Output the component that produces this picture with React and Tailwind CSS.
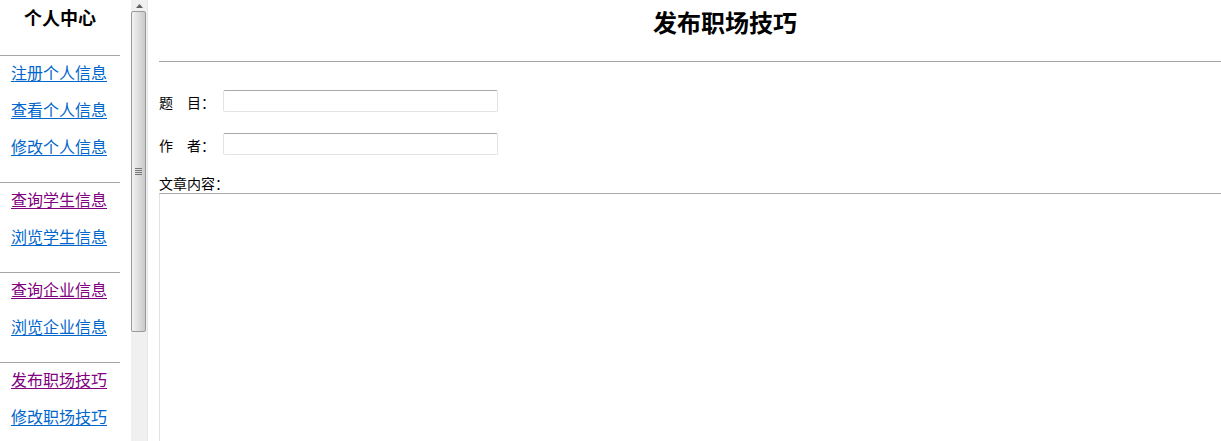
export default function App() {
  const linkBlue = "text-[#0066cc] underline underline-offset-[2px]";
  const linkPurple = "text-[#800080] underline underline-offset-[2px]";
  const Group = ({ items }) => (
    <div className="pt-[6px] pb-[26px] pl-[11px] flex flex-col gap-[17px]">
      {items.map(([t, v]) => (
        <a key={t} href="#" className={`block h-[20px] leading-[20px] text-[16px] ${v ? linkPurple : linkBlue}`}>
          {t}
        </a>
      ))}
    </div>
  );
  const Hr = ({ w }) => <div className={`h-px bg-[#a6a6a6] ${w}`} />;
  return (
    <div className="w-[1221px] h-[441px] overflow-hidden flex bg-white text-black font-['Noto_Sans_CJK_SC','Noto_Sans',sans-serif]">
      {/* left frame */}
      <div className="w-[131px] shrink-0">
        <div className="w-[120px] h-[55px] pt-[7px] text-center">
          <div className="text-[18px] leading-[20px] font-bold">个人中心</div>
        </div>
        <Hr w="w-[120px]" />
        <Group items={[["注册个人信息", false], ["查看个人信息", false], ["修改个人信息", false]]} />
        <Hr w="w-[120px]" />
        <Group items={[["查询学生信息", true], ["浏览学生信息", false]]} />
        <Hr w="w-[120px]" />
        <Group items={[["查询企业信息", true], ["浏览企业信息", false]]} />
        <Hr w="w-[120px]" />
        <Group items={[["发布职场技巧", true], ["修改职场技巧", false]]} />
      </div>
      {/* scrollbar */}
      <div className="w-[17px] shrink-0 h-full bg-[#f0f0f0] flex flex-col border-r border-[#e6e6e6]">
        <div className="h-[11px] flex items-center justify-center">
          <svg width="7" height="4" viewBox="0 0 7 4">
            <path d="M0 4 L3.5 0 L7 4 Z" fill="#606060" />
          </svg>
        </div>
        <div className="w-[15px] h-[321px] border border-[#9a9a9a] rounded-[2px] bg-[linear-gradient(to_right,#f4f4f4,#e2e2e2_40%,#c9c9c9)] flex items-center justify-center">
          <div className="flex flex-col gap-[1px]">
            <div className="w-[7px] h-px bg-[#777]" />
            <div className="w-[7px] h-px bg-[#777]" />
            <div className="w-[7px] h-px bg-[#777]" />
            <div className="w-[7px] h-px bg-[#777]" />
          </div>
        </div>
      </div>
      {/* main frame */}
      <div className="pl-[11px] shrink-0">
        <div className="w-[1132px] h-[61px] pt-[10px] text-center">
          <div className="text-[24px] leading-[24px] font-bold">发布职场技巧</div>
        </div>
        <Hr w="w-[1132px]" />
        <div className="mt-[28px] h-[22px] flex items-center text-[14px]">
          <span className="w-[56px] leading-[16px] mt-[2px]">题　目：</span>
          <input className="ml-[8px] w-[275px] h-[22px] border border-[#e3e3e3] border-t-[#a8a8a8] rounded-[2px] outline-none" />
        </div>
        <div className="mt-[21px] h-[22px] flex items-center text-[14px]">
          <span className="w-[56px] leading-[16px] mt-[2px]">作　者：</span>
          <input className="ml-[8px] w-[275px] h-[22px] border border-[#e3e3e3] border-t-[#a8a8a8] rounded-[2px] outline-none" />
        </div>
        <div className="mt-[20px] text-[14px] leading-[16px]">文章内容：</div>
        <textarea className="block mt-[2px] w-[1132px] h-[300px] border border-[#e0e0e6] border-t-[#a8a8a8] outline-none resize-none" />
      </div>
    </div>
  );
}
